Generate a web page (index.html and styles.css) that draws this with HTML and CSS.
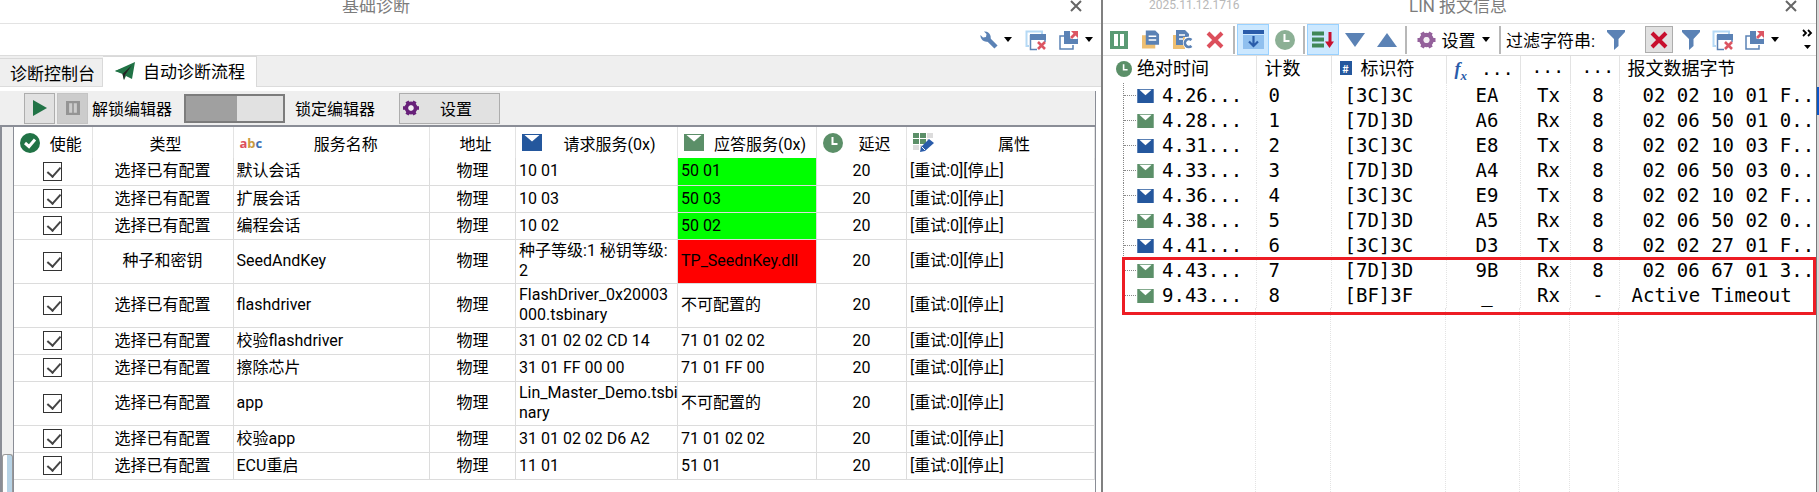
FILE: index.html
```
<!DOCTYPE html>
<html lang="zh-CN">
<head>
  <meta charset="UTF-8" />
  <meta name="viewport" content="width=device-width, initial-scale=1.0"/>
  <title>基础诊断</title>
  <link rel="stylesheet" href="styles.css">
</head>
<body>

  <svg class="sprite" aria-hidden="true">
    <symbol id="i-close" viewBox="0 0 12 12"><path d="M1 1L11 11M11 1L1 11" stroke="#666" stroke-width="2"/></symbol>
    <symbol id="i-wrench" viewBox="0 0 18 18"><path d="M7 7L16 16" stroke="#5b82b5" stroke-width="4.500"/><path d="M4 .5L6.500 3L6 6L3 6.500L.5 4A6 6 0 0 0 8 10.500L10.500 8A6 6 0 0 0 4 .5Z" fill="#5b82b5"/></symbol>
    <symbol id="i-winclose" viewBox="0 0 22 22"><path d="M4 17H1.500V2.500H17V5" fill="none" stroke="#b5d9f5" stroke-width="2"/><path d="M5.500 6V20.500H12M20 13V6" fill="none" stroke="#5b82b5" stroke-width="1.500"/><path d="M5 5H21V11H5Z" fill="#5b82b5"/><path d="M13 13L20 20M20 13L13 20" stroke="#dc5562" stroke-width="2.600"/></symbol>
    <symbol id="i-export" viewBox="0 0 20 20"><path d="M5 6H1V19H14V15" fill="none" stroke="#5b82b5" stroke-width="1.500"/><path d="M5 1H11V9H19V14H5Z" fill="#5b82b5"/><path d="M11 8L16 12L19 8V14H11Z" fill="#5b82b5"/><path d="M12 1H19V8L16.500 5.500L13 9L11 7L14.500 3.500Z" fill="#dc5562"/></symbol>
    <symbol id="i-plane" viewBox="0 0 20 18"><path d="M0 9L20 0L17 17L11 14L9 18L7.500 12Z" fill="#217346"/><path d="M7.500 12L17 3L10 13L9 18Z" fill="#222"/><path d="M0 9L17 3L7 11Z" fill="#217346"/></symbol>
    <symbol id="i-play" viewBox="0 0 14 16"><path d="M0 0L14 8L0 16Z" fill="#217346"/></symbol>
    <symbol id="i-pause" viewBox="0 0 18 18"><path d="M0 0H18V18H0ZM4 3V15H8V3ZM10 3V15H14V3Z" fill="currentColor" fill-rule="evenodd"/></symbol>
    <symbol id="i-gear" viewBox="0 0 18 18"><circle cx="9" cy="9" r="5" fill="none" stroke="currentColor" stroke-width="4.500"/><path d="M4.500 1.500L6.500 5M13.500 1.500L11.500 5M0 9H4M18 9H14M4.500 16.500L6.500 13M13.500 16.500L11.500 13" stroke="currentColor" stroke-width="4"/><circle cx="9" cy="9" r="3" fill="#f3eef3"/></symbol>
    <symbol id="i-ok" viewBox="0 0 20 20"><circle cx="10" cy="10" r="10" fill="#217346"/><path d="M5 10L9 13.500L15 6.500" fill="none" stroke="#fff" stroke-width="3"/></symbol>
    <symbol id="i-mail" viewBox="0 0 20 17"><path d="M0 0H20V17H0Z" fill="currentColor"/><path d="M2.500 1H17.500L10 7.500Z" fill="#fff"/></symbol>
    <symbol id="i-clock" viewBox="0 0 20 20"><circle cx="10" cy="10" r="10" fill="currentColor"/><path d="M9.500 4V11H14.500" fill="none" stroke="#fff" stroke-width="2"/></symbol>
    <symbol id="i-edit" viewBox="0 0 21 19"><path d="M0 0H6V5H0ZM7 0H13V5H7ZM0 6H6V11H0ZM7 6H13V11H7Z" fill="#5b8f68"/><path d="M14 0H20V5H14ZM0 12H6V17H0ZM7 12H9V16H7ZM14 6H16V7H14Z" fill="#dcdcdc"/><path d="M16 6L21 10L12 18L7 19L8 14Z" fill="#2a5caa"/><path d="M9 14L12 17" stroke="#fff"/></symbol>
    <symbol id="i-copy" viewBox="0 0 19 19"><path d="M0 5H14V19H0Z" fill="#eebf72"/><path d="M4 0H14L18 4V15H4Z" fill="#5b82b5"/><path d="M7 6H15M7 10H15" stroke="#fff" stroke-width="1.500"/></symbol>
    <symbol id="i-copyc" viewBox="0 0 20 19"><path d="M0 5H12V19H0Z" fill="#eebf72"/><path d="M3 0H12L16 4V7H10V15H3Z" fill="#5b82b5"/><path d="M6 5H12M6 9H10" stroke="#fff" stroke-width="1.500"/><path d="M19 10A4 4 0 1 0 19 16" fill="none" stroke="#fff" stroke-width="5"/><path d="M18.500 10A4 4 0 1 0 18.500 16" fill="none" stroke="#5b82b5" stroke-width="2.600"/></symbol>
    <symbol id="i-x" viewBox="0 0 18 18"><path d="M2 2L16 16M16 2L2 16" stroke="currentColor" stroke-width="4"/></symbol>
    <symbol id="i-dock" viewBox="0 0 21 19"><path d="M0 0H21V4H0Z" fill="#2a5caa"/><path d="M0 5H21V19H0Z" fill="#90c0ef"/><path d="M10.500 6V16M6 11.500L10.500 16L15 11.500" fill="none" stroke="#2a5caa" stroke-width="2.200"/></symbol>
    <symbol id="i-sort" viewBox="0 0 22 18"><path d="M0 2.500H12M0 8.500H12M0 14.500H12" stroke="#3f8757" stroke-width="4"/><path d="M18 1V13" stroke="#c8102e" stroke-width="3"/><path d="M13 10.500H22L17.500 17Z" fill="#c8102e"/></symbol>
    <symbol id="i-down" viewBox="0 0 20 14"><path d="M0 0H20L10 14Z" fill="#5b82b5"/></symbol>
    <symbol id="i-up" viewBox="0 0 20 14"><path d="M0 14H20L10 0Z" fill="#5b82b5"/></symbol>
    <symbol id="i-funnel" viewBox="0 0 18 20"><path d="M0 0H18V2L11.500 9V16L7 20V9L0 2Z" fill="#5b82b5"/></symbol>
    <symbol id="i-more" viewBox="0 0 11 21"><path d="M1 1L4 4L1 7M6 1L9 4L6 7" fill="none" stroke="#000" stroke-width="1.800"/><path d="M2 16H9L5.500 20Z"/></symbol>
  </svg>

  <div class="workspace">

    <section class="panel diag">
      <header class="title-bar">
        <h1>基础诊断</h1>
        <button class="close" aria-label="关闭"><svg width="12" height="12"><use href="#i-close"/></svg></button>
      </header>

      <div class="toolbar right">
        <button class="tool drop" aria-label="工具"><svg width="18" height="18"><use href="#i-wrench"/></svg><i class="caret"></i></button>
        <button class="tool" aria-label="关闭窗口"><svg width="22" height="22"><use href="#i-winclose"/></svg></button>
        <button class="tool drop" aria-label="导出"><svg width="20" height="20"><use href="#i-export"/></svg><i class="caret"></i></button>
      </div>

      <nav class="tabs">
        <a href="#" class="tab">诊断控制台</a>
        <a href="#" class="tab active"><svg width="20" height="18"><use href="#i-plane"/></svg>自动诊断流程</a>
      </nav>

      <div class="flow">
        <div class="flow-bar">
          <button class="push" aria-label="运行"><svg width="14" height="16"><use href="#i-play"/></svg></button>
          <button class="push off" aria-label="暂停"><svg width="14" height="14"><use href="#i-pause"/></svg></button>
          <label for="lock" class="unlock">解锁编辑器</label>
          <input type="checkbox" id="lock" class="switch" checked>
          <label for="lock" class="lock">锁定编辑器</label>
          <button class="push settings"><svg class="purple" width="16" height="16"><use href="#i-gear"/></svg><span>设置</span></button>
        </div>

        <div class="grid-area">
          <div class="gutter"><div class="thumb"></div></div>
          <table class="steps">
            <colgroup>
              <col class="w-on"><col class="w-type"><col class="w-name"><col class="w-addr">
              <col class="w-req"><col class="w-res"><col class="w-delay"><col class="w-attr">
            </colgroup>
            <thead>
              <tr>
                <th><div><svg width="20" height="20"><use href="#i-ok"/></svg><span>使能</span></div></th>
                <th><div><span>类型</span></div></th>
                <th><div><b class="abc"><i>a</i><i>b</i><i>c</i></b><span>服务名称</span></div></th>
                <th><div><span>地址</span></div></th>
                <th><div><svg class="blue" width="20" height="17"><use href="#i-mail"/></svg><span>请求服务(0x)</span></div></th>
                <th><div><svg class="green" width="20" height="17"><use href="#i-mail"/></svg><span>应答服务(0x)</span></div></th>
                <th><div><svg class="green" width="20" height="20"><use href="#i-clock"/></svg><span>延迟</span></div></th>
                <th><div><svg width="21" height="19"><use href="#i-edit"/></svg><span>属性</span></div></th>
              </tr>
            </thead>
            <tbody id="steps"></tbody>
          </table>
        </div>
      </div>
    </section>

    <section class="panel lin">
      <header class="title-bar">
        <small>2025.11.12.1716</small>
        <h1>LIN 报文信息</h1>
        <button class="close" aria-label="关闭"><svg width="12" height="12"><use href="#i-close"/></svg></button>
      </header>

      <div class="toolbar">
        <button class="tool teal" aria-label="暂停"><svg width="18" height="18"><use href="#i-pause"/></svg></button>
        <button class="tool" aria-label="复制"><svg width="18" height="19"><use href="#i-copy"/></svg></button>
        <button class="tool" aria-label="复制为C"><svg width="20" height="19"><use href="#i-copyc"/></svg></button>
        <button class="tool pink" aria-label="清除"><svg width="18" height="18"><use href="#i-x"/></svg></button>
        <span class="sep"></span>
        <button class="tool on" aria-label="停靠"><svg width="21" height="19"><use href="#i-dock"/></svg></button>
        <button class="tool pale" aria-label="时间"><svg width="20" height="20"><use href="#i-clock"/></svg></button>
        <span class="sep"></span>
        <button class="tool on" aria-label="滚动"><svg width="22" height="18"><use href="#i-sort"/></svg></button>
        <button class="tool" aria-label="向下"><svg width="20" height="14"><use href="#i-down"/></svg></button>
        <button class="tool" aria-label="向上"><svg width="20" height="14"><use href="#i-up"/></svg></button>
        <span class="sep"></span>
        <button class="tool text mauve"><svg width="19" height="18"><use href="#i-gear"/></svg><span>设置</span><i class="caret"></i></button>
        <span class="sep"></span>
        <span class="filter-label">过滤字符串:</span>
        <button class="tool" aria-label="过滤"><svg width="18" height="20"><use href="#i-funnel"/></svg></button>
        <button class="tool boxed" aria-label="清除过滤"><svg width="18" height="18"><use href="#i-x"/></svg></button>
        <button class="tool" aria-label="过滤设置"><svg width="18" height="20"><use href="#i-funnel"/></svg></button>
        <button class="tool" aria-label="关闭窗口"><svg width="22" height="22"><use href="#i-winclose"/></svg></button>
        <button class="tool drop" aria-label="导出"><svg width="20" height="20"><use href="#i-export"/></svg><i class="caret"></i></button>
        <button class="tool more" aria-label="更多"><svg width="11" height="21"><use href="#i-more"/></svg></button>
      </div>

      <div class="trace">
        <table class="messages">
          <colgroup>
            <col class="w-time"><col class="w-count"><col class="w-id"><col class="w-sum">
            <col class="w-dir"><col class="w-len"><col>
          </colgroup>
          <thead>
            <tr>
              <th class="time"><svg class="green" width="16" height="16"><use href="#i-clock"/></svg>绝对时间</th>
              <th>计数</th>
              <th><b class="hash">#</b>标识符</th>
              <th><b class="fx">f<sub>x</sub></b><span class="dots">...</span></th>
              <th class="dots">...</th>
              <th class="dots">...</th>
              <th>报文数据字节</th>
            </tr>
          </thead>
          <tbody id="messages"></tbody>
        </table>
        <div class="lines"><i></i><i></i><i></i><i></i><i></i><i></i></div>
        <div class="marker"></div>
      </div>
    </section>

    <div class="edge"><div class="edge-tab"></div></div>
  </div>

  <script>
    const SEL = '选择已有配置';
    const NONE = '不可配置的';

    // type, name, request, response, state
    const steps = [
      [SEL, '默认会话', '10 01', '50 01', 'pass'],
      [SEL, '扩展会话', '10 03', '50 03', 'pass'],
      [SEL, '编程会话', '10 02', '50 02', 'pass'],
      ['种子和密钥', 'SeedAndKey', '种子等级:1 秘钥等级:<br>2', 'TP_SeednKey.dll', 'fail'],
      [SEL, 'flashdriver', 'FlashDriver_0x20003<br>000.tsbinary', NONE, ''],
      [SEL, '校验flashdriver', '31 01 02 02 CD 14', '71 01 02 02', ''],
      [SEL, '擦除芯片', '31 01 FF 00 00', '71 01 FF 00', ''],
      [SEL, 'app', 'Lin_Master_Demo.tsbi<br>nary', NONE, ''],
      [SEL, '校验app', '31 01 02 02 D6 A2', '71 01 02 02', ''],
      [SEL, 'ECU重启', '11 01', '51 01', '']
    ];

    document.getElementById('steps').innerHTML = steps.map(([type, name, req, res, state]) => `
      <tr class="${req.includes('<br>') ? 'tall' : ''}">
        <td class="c"><input type="checkbox" class="tick" aria-label="${name}" checked></td>
        <td class="c">${type}</td>
        <td>${name}</td>
        <td class="c">物理</td>
        <td class="req">${req}</td>
        <td class="${state}">${res}</td>
        <td class="c">20</td>
        <td>[重试:0][停止]</td>
      </tr>`).join('');

    const messages = [
      ['4.26', '[3C]3C', 'EA', 'Tx', '8', '02 02 10 01 F..'],
      ['4.28', '[7D]3D', 'A6', 'Rx', '8', '02 06 50 01 0..'],
      ['4.31', '[3C]3C', 'E8', 'Tx', '8', '02 02 10 03 F..'],
      ['4.33', '[7D]3D', 'A4', 'Rx', '8', '02 06 50 03 0..'],
      ['4.36', '[3C]3C', 'E9', 'Tx', '8', '02 02 10 02 F..'],
      ['4.38', '[7D]3D', 'A5', 'Rx', '8', '02 06 50 02 0..'],
      ['4.41', '[3C]3C', 'D3', 'Tx', '8', '02 02 27 01 F..'],
      ['4.43', '[7D]3D', '9B', 'Rx', '8', '02 06 67 01 3..'],
      ['9.43', '[BF]3F', '_', 'Rx', '-', 'Active Timeout']
    ];

    document.getElementById('messages').innerHTML = messages.map(([time, id, sum, dir, len, data], i) => `
      <tr>
        <td class="node"><div><i class="branch"></i><svg class="${dir === 'Tx' ? 'blue' : 'green'}" width="17" height="14"><use href="#i-mail"/></svg>${time}...</div></td>
        <td class="count">${i}</td>
        <td class="id">${id}</td>
        <td class="sum">${sum}</td>
        <td class="mid">${dir}</td>
        <td class="mid">${len}</td>
        <td class="data${len === '-' ? ' note' : ''}">${data}</td>
      </tr>`).join('');
  </script>
</body>
</html>
```

FILE: styles.css
```
* { box-sizing: border-box; }

body {
  font-family: Roboto, 'Noto Sans CJK SC', sans-serif;
  font-size: 16px;
  background: #fff;
  margin: 0;
  color: #000;
}

button {
  font: inherit;
  color: inherit;
  background: none;
  border: 0;
  padding: 0;
}

svg {
  display: block;
  flex: none;
}

.sprite {
  position: absolute;
  width: 0;
  height: 0;
}

.blue { color: #24579d; }
.green { color: #5b8f68; }
.purple { color: #68217a; }

.workspace {
  display: grid;
  grid-template-columns: minmax(0, 1103fr) minmax(0, 713fr) 3px;
  min-height: 100vh;
  overflow: hidden;
}

.panel {
  display: flex;
  flex-direction: column;
}

.diag { border-right: 2px solid #808080; }

/* title bars */
.title-bar {
  display: grid;
  height: 24px;
  line-height: 12px;
  border-bottom: 1px solid #e3e3e3;
}

.title-bar h1 {
  grid-column: 2;
  margin: 0;
  font-size: 17px;
  font-weight: 400;
  line-height: 12px;
  color: #7c7c7c;
}

.diag .title-bar { grid-template-columns: 342px auto 1fr; }
.lin .title-bar { grid-template-columns: 306px auto 1fr; }

.title-bar small {
  margin-left: 46px;
  font-size: 12px;
  line-height: 11px;
  color: #b8b8b8;
}

.close {
  grid-column: 3;
  align-self: start;
  justify-self: end;
  margin-right: 19px;
}

/* toolbars */
.toolbar {
  display: flex;
  align-items: center;
  height: 32px;
  border-bottom: 1px solid #dcdcdc;
}

.toolbar.right {
  justify-content: flex-end;
  gap: 4px;
  padding-right: 5px;
}

.tool {
  display: flex;
  flex: none;
  align-items: center;
  justify-content: center;
  width: 32px;
  height: 31px;
}

.tool.drop {
  width: 40px;
  gap: 6px;
}

.tool.on {
  background: #cce8ff;
  border: 1px solid #99d1ff;
}

.tool.text {
  width: 88px;
  gap: 6px;
  font-size: 17px;
}

.tool.text span { color: #000; }

.tool.boxed {
  width: 28px;
  height: 27px;
  margin: 0 2px 0 13px;
  background: #e1e1e1;
  border: 1px solid #adadad;
  color: #c8102e;
}

.tool.more {
  width: 11px;
  margin: 0 3px 0 auto;
}

.teal { color: #5a9a74; }
.pink { color: #dc4f5c; }
.pale { color: #8cb095; }
.mauve { color: #94619b; }

.sep {
  flex: none;
  width: 2px;
  height: 28px;
  margin: 0 2px;
  background: #b8b8b8;
}

.caret {
  border: 4px solid transparent;
  border-top: 5px solid #000;
  border-bottom: 0;
}

.filter-label {
  flex: none;
  width: 97px;
  padding-left: 3px;
  font-size: 17px;
}

.lin .tool.drop { width: 46px; }

/* tabs */
.tabs {
  display: flex;
  height: 31px;
  background: #efefef;
  border-bottom: 1px solid #dcdcdc;
}

.tab {
  display: flex;
  align-items: center;
  width: 103px;
  margin-top: 2px;
  padding-left: 10px;
  border-top: 1px solid #d9d9d9;
  border-right: 1px solid #d9d9d9;
  font-size: 17px;
  color: #000;
  text-decoration: none;
}

.tab.active {
  width: 154px;
  gap: 8px;
  margin: 0 0 -1px;
  padding: 0 0 3px 12px;
  background: #fff;
}

/* flow editor */
.flow {
  display: flex;
  flex: 1;
  flex-direction: column;
  margin: 4px 5px 0 0;
  border-right: 1px solid #8a8d96;
}

.flow-bar {
  display: flex;
  align-items: center;
  height: 34px;
  padding-left: 24px;
  background: #efefef;
}

.push {
  display: flex;
  align-items: center;
  justify-content: center;
  width: 31px;
  height: 31px;
  margin-right: 2px;
  background: #e1e1e1;
  border: 1px solid #adadad;
}

.push.off {
  background: #ccc;
  border-color: #c4c4c4;
  color: #949494;
}

.unlock {
  width: 94px;
  padding-left: 2px;
}

.lock {
  width: 114px;
  padding-left: 10px;
}

.switch {
  appearance: none;
  width: 101px;
  height: 29px;
  margin: 0;
  border: 2px solid #7c7c7c;
  background: linear-gradient(#e1e1e1, #e1e1e1) right / 46px 100% no-repeat #a0a0a0;
}

.settings {
  width: 101px;
  justify-content: flex-start;
  padding-left: 3px;
}

.settings span {
  flex: 1;
  padding-right: 6px;
  text-align: center;
}

.grid-area {
  display: flex;
  flex: 1;
  align-items: stretch;
  border-top: 2px solid #8a8d96;
}

.gutter {
  display: flex;
  flex: none;
  align-items: flex-end;
  width: 14px;
  background: #efefef;
  border-left: 2px solid #8a8d96;
  border-right: 1px solid #8a8d96;
}

.thumb {
  width: 100%;
  height: 38px;
  border: 1px solid #999;
  border-bottom: 0;
  border-radius: 3px 3px 0 0;
  background: linear-gradient(90deg, #fff 50%, #b7d3e6 50%);
}

.steps {
  align-self: flex-start;
  width: 100%;
  table-layout: fixed;
  border-collapse: collapse;
}

.w-on { width: 78px; }
.w-type { width: 141px; }
.w-addr { width: 86px; }
.w-req { width: 162px; }
.w-res { width: 139px; }
.w-delay { width: 90px; }
.w-attr { width: 188px; }

.steps th {
  height: 31px;
  padding: 0;
  border-right: 1px solid #e3e3e3;
  font-weight: 400;
}

.steps th div {
  display: flex;
  align-items: center;
  padding-left: 6px;
}

.steps th span {
  flex: 1;
  text-align: center;
  white-space: nowrap;
}

.abc {
  font: bold 13px 'Open Sans', sans-serif;
}

.abc i {
  font-style: normal;
  color: #dc4f5c;
}

.abc i + i { color: #c99a3f; }
.abc i + i + i { color: #3c6fb4; }

.steps td {
  height: 27px;
  padding: 0 3px;
  border: 1px solid #dcdcdc;
  border-left: 0;
  line-height: 20px;
  white-space: nowrap;
}

.steps tr:first-child td { border-top: 0; }
.steps .tall td { height: 44px; }
.steps .c { text-align: center; }
.steps .pass { background: #0f0; }
.steps .fail { background: #f00; }

.tick {
  appearance: none;
  display: block;
  width: 19px;
  height: 19px;
  margin: 0 auto;
  border: 1px solid #333;
  background: #fff;
}

.tick:checked::after {
  content: '';
  display: block;
  width: 6px;
  height: 11px;
  margin: 1px 0 0 6px;
  border: solid #444;
  border-width: 0 2px 2px 0;
  transform: rotate(42deg);
}

/* message trace */
.trace {
  position: relative;
  display: flex;
  flex: 1;
  flex-direction: column;
  font: 19px 'DejaVu Sans Mono', 'Noto Sans CJK SC', monospace;
}

.messages {
  width: 100%;
  table-layout: fixed;
  border-collapse: collapse;
}

.w-time { width: 153px; }
.w-count { width: 75px; }
.w-id { width: 115px; }
.w-sum { width: 74px; }
.w-dir { width: 50px; }
.w-len { width: 49px; }

.messages th {
  height: 27px;
  padding: 0 0 0 8px;
  border-right: 1px solid #e3e3e3;
  font-family: 'Noto Sans CJK SC', sans-serif;
  font-size: 18px;
  font-weight: 400;
  line-height: 22px;
  text-align: left;
  vertical-align: top;
  white-space: nowrap;
}

.messages .dots { font-family: 'DejaVu Sans Mono', monospace; }
.messages th.dots { padding-left: 11px; }
.messages .time { padding-left: 13px; }

.messages th svg {
  display: inline-block;
  margin-right: 5px;
  vertical-align: -2px;
}

.messages td {
  height: 25px;
  padding: 0;
  border-right: 1px dotted #e3e3e3;
  line-height: 25px;
  white-space: nowrap;
}

.messages tr > :last-child { border-right: 0; }

.messages .mid {
  padding: 0 0 0 7px;
  text-align: center;
}

.messages .count { padding-left: 12px; }
.messages .id { padding-left: 13px; }
.messages .sum { text-align: center; padding-left: 8px; }
.messages .data { padding-left: 23px; }
.messages .note { padding-left: 12px; }

/* column lines below the last message */
.lines {
  display: grid;
  flex: 1;
  grid-template-columns: 153px 75px 115px 74px 50px 49px;
}

.lines i { border-right: 1px dotted #e3e3e3; }

.hash {
  display: inline-block;
  width: 12px;
  margin-right: 9px;
  background: #24579d;
  color: #fff;
  font-size: 11px;
  line-height: 14px;
  text-align: center;
  vertical-align: 2px;
}

.fx {
  margin-right: 14px;
  color: #2a5caa;
  font: italic bold 18px/18px 'Liberation Serif', serif;
}

.fx sub { font-size: 13px; line-height: 0; }

.node div {
  display: flex;
  align-items: center;
  height: 25px;
  margin-left: 20px;
  border-left: 1px dotted #888;
}

.branch {
  width: 12px;
  margin-right: 1px;
  border-top: 1px dotted #888;
}

.node svg { margin-right: 8px; }

.marker {
  position: absolute;
  top: 201px;
  left: 19px;
  right: 0;
  height: 58px;
  border: 3px solid #ed1c24;
}

.edge {
  padding-top: 87px;
  background: #d8d8d8;
  border-left: 1px solid #777;
}

.edge-tab {
  height: 28px;
  background: #0a56c8;
}
```
